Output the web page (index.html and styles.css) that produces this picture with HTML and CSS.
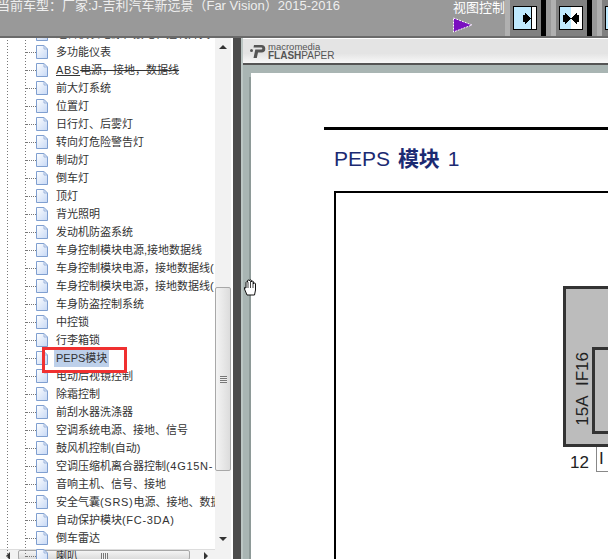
FILE: index.html
```html
<!DOCTYPE html>
<html lang="zh">
<head>
<meta charset="utf-8">
<title>PEPS模块</title>
<link rel="stylesheet" href="styles.css">
</head>
<body>
<div class="app">
  <header class="top">
    <div class="model">当前车型：厂家:J-吉利汽车新远景（Far Vision）2015-2016</div>
    <div class="view">
      <div class="view-label">视图控制</div>
      <svg class="view-arrow" width="20" height="16" viewBox="0 0 20 16"><path d="M0.5 1 L19 8 L0.5 15 Z" fill="#7a0fc0" stroke="#fff" stroke-width="1" stroke-dasharray="2 1"/></svg>
    </div>
    <div class="btn">
      <div class="btn-face">
        <div class="screen">
          <div class="pane blue grow right"><svg width="8" height="11" viewBox="0 0 8 11"><path d="M0 2H2V0H3V1H4V2H5V3H6V4H7V5H8V6H7V7H6V8H5V9H4V10H3V11H2V9H0Z"/></svg></div>
          <div class="pane white narrow"></div>
        </div>
      </div>
    </div>
    <div class="btn">
      <div class="btn-face">
        <div class="screen">
          <div class="pane blue grow right"><svg width="8" height="11" viewBox="0 0 8 11"><path d="M0 2H2V0H3V1H4V2H5V3H6V4H7V5H8V6H7V7H6V8H5V9H4V10H3V11H2V9H0Z"/></svg></div>
          <div class="pane white grow left"><svg width="8" height="11" viewBox="0 0 8 11"><path d="M8 2H6V0H5V1H4V2H3V3H2V4H1V5H0V6H1V7H2V8H3V9H4V10H5V11H6V9H8Z"/></svg></div>
        </div>
      </div>
    </div>
    <div class="btn">
      <div class="btn-face">
        <div class="screen">
          <div class="pane blue narrow"></div>
          <div class="pane white grow left"><svg width="8" height="11" viewBox="0 0 8 11"><path d="M8 2H6V0H5V1H4V2H3V3H2V4H1V5H0V6H1V7H2V8H3V9H4V10H5V11H6V9H8Z"/></svg></div>
        </div>
      </div>
    </div>
  </header>
  <main class="main">
    <nav class="tree">
      <ul class="list">
        <li class="row"><i class="dash"></i><svg class="doc" viewBox="0 0 12 14"><use href="#doc"/></svg><span class="label">组合仪表电源、接地、控制开关</span></li>
        <li class="row"><i class="dash"></i><svg class="doc" viewBox="0 0 12 14"><use href="#doc"/></svg><span class="label">多功能仪表</span></li>
        <li class="row"><i class="dash"></i><svg class="doc" viewBox="0 0 12 14"><use href="#doc"/></svg><span class="label"><u class="lat">ABS</u><s>电源，接地，数据线</s></span></li>
        <li class="row"><i class="dash"></i><svg class="doc" viewBox="0 0 12 14"><use href="#doc"/></svg><span class="label">前大灯系统</span></li>
        <li class="row"><i class="dash"></i><svg class="doc" viewBox="0 0 12 14"><use href="#doc"/></svg><span class="label">位置灯</span></li>
        <li class="row"><i class="dash"></i><svg class="doc" viewBox="0 0 12 14"><use href="#doc"/></svg><span class="label">日行灯、后雾灯</span></li>
        <li class="row"><i class="dash"></i><svg class="doc" viewBox="0 0 12 14"><use href="#doc"/></svg><span class="label">转向灯危险警告灯</span></li>
        <li class="row"><i class="dash"></i><svg class="doc" viewBox="0 0 12 14"><use href="#doc"/></svg><span class="label">制动灯</span></li>
        <li class="row"><i class="dash"></i><svg class="doc" viewBox="0 0 12 14"><use href="#doc"/></svg><span class="label">倒车灯</span></li>
        <li class="row"><i class="dash"></i><svg class="doc" viewBox="0 0 12 14"><use href="#doc"/></svg><span class="label">顶灯</span></li>
        <li class="row"><i class="dash"></i><svg class="doc" viewBox="0 0 12 14"><use href="#doc"/></svg><span class="label">背光照明</span></li>
        <li class="row"><i class="dash"></i><svg class="doc" viewBox="0 0 12 14"><use href="#doc"/></svg><span class="label">发动机防盗系统</span></li>
        <li class="row"><i class="dash"></i><svg class="doc" viewBox="0 0 12 14"><use href="#doc"/></svg><span class="label">车身控制模块电源,接地数据线</span></li>
        <li class="row"><i class="dash"></i><svg class="doc" viewBox="0 0 12 14"><use href="#doc"/></svg><span class="label">车身控制模块电源，接地数据线(</span></li>
        <li class="row"><i class="dash"></i><svg class="doc" viewBox="0 0 12 14"><use href="#doc"/></svg><span class="label">车身控制模块电源，接地数据线(</span></li>
        <li class="row"><i class="dash"></i><svg class="doc" viewBox="0 0 12 14"><use href="#doc"/></svg><span class="label">车身防盗控制系统</span></li>
        <li class="row"><i class="dash"></i><svg class="doc" viewBox="0 0 12 14"><use href="#doc"/></svg><span class="label">中控锁</span></li>
        <li class="row"><i class="dash"></i><svg class="doc" viewBox="0 0 12 14"><use href="#doc"/></svg><span class="label">行李箱锁</span></li>
        <li class="row"><i class="dash"></i><svg class="doc" viewBox="0 0 12 14"><use href="#doc"/></svg><span class="label current">PEPS模块</span></li>
        <li class="row"><i class="dash"></i><svg class="doc" viewBox="0 0 12 14"><use href="#doc"/></svg><span class="label">电动后视镜控制</span></li>
        <li class="row"><i class="dash"></i><svg class="doc" viewBox="0 0 12 14"><use href="#doc"/></svg><span class="label">除霜控制</span></li>
        <li class="row"><i class="dash"></i><svg class="doc" viewBox="0 0 12 14"><use href="#doc"/></svg><span class="label">前刮水器洗涤器</span></li>
        <li class="row"><i class="dash"></i><svg class="doc" viewBox="0 0 12 14"><use href="#doc"/></svg><span class="label">空调系统电源、接地、信号</span></li>
        <li class="row"><i class="dash"></i><svg class="doc" viewBox="0 0 12 14"><use href="#doc"/></svg><span class="label">鼓风机控制(自动)</span></li>
        <li class="row"><i class="dash"></i><svg class="doc" viewBox="0 0 12 14"><use href="#doc"/></svg><span class="label">空调压缩机离合器控制<span class="lat">(4G15N-</span></span></li>
        <li class="row"><i class="dash"></i><svg class="doc" viewBox="0 0 12 14"><use href="#doc"/></svg><span class="label">音响主机、信号、接地</span></li>
        <li class="row"><i class="dash"></i><svg class="doc" viewBox="0 0 12 14"><use href="#doc"/></svg><span class="label">安全气囊<span class="lat">(SRS)</span>电源、接地、数据</span></li>
        <li class="row"><i class="dash"></i><svg class="doc" viewBox="0 0 12 14"><use href="#doc"/></svg><span class="label">自动保护模块<span class="lat">(FC-3DA)</span></span></li>
        <li class="row"><i class="dash"></i><svg class="doc" viewBox="0 0 12 14"><use href="#doc"/></svg><span class="label">倒车雷达</span></li>
        <li class="row"><i class="dash"></i><svg class="doc" viewBox="0 0 12 14"><use href="#doc"/></svg><span class="label">喇叭</span></li>
      </ul>
      <div class="vscroll">
        <span class="arrow-up"></span>
        <div class="vthumb"><span class="grip-v"></span></div>
        <span class="arrow-down"></span>
      </div>
      <div class="hscroll">
        <span class="arrow-left"></span>
        <div class="hthumb"><span class="grip-h"></span></div>
        <span class="arrow-right"></span>
      </div>
      <div class="callout"></div>
    </nav>
    <div class="divider"></div>
    <section class="viewer">
      <div class="fp-bar">
        <svg class="fp-mark" width="16" height="15" viewBox="0 0 16 15"><circle cx="1.500" cy="6.500" r="1.500" fill="#555"/><path d="M4 1h7.500a3.800 3.800 0 0 1 0 7.600H8L6.800 14H3.500l1.800-8.500h6a1 1 0 0 0 0-2H3.500z" fill="#555"/></svg>
        <div class="fp-text">
          <div class="fp-small">macromedia</div>
          <div class="fp-big"><b>FLASH</b>PAPER</div>
        </div>
      </div>
      <div class="stage">
        <article class="page">
          <div class="rule"></div>
          <h1 class="title">PEPS <b>模块</b> 1</h1>
          <div class="diagram">
            <div class="fuse-block">
              <div class="fuse-label">15A&nbsp;&nbsp;IF16</div>
              <div class="fuse-inner"></div>
            </div>
            <div class="pin-row">
              <span class="pin-num">12</span>
              <span class="pin-box">I</span>
            </div>
          </div>
        </article>
        <svg class="hand" width="14" height="18" viewBox="0 0 14 18"><path d="M4 16 1.500 10V8.500l1.500.5V3.500a1 1 0 0 1 1.500-.500V2a1 1 0 0 1 2 0V1.800a1 1 0 0 1 2 .2V3a1 1 0 0 1 2 .3V5a1 1 0 0 1 2 0V11l-1 5Z" fill="#fff" stroke="#111" stroke-width="1"/><path d="M5 3v6M7.500 2v7M10 3v6" stroke="#111" stroke-width=".8"/></svg>
      </div>
    </section>
  </main>
</div>
<svg class="defs" width="0" height="0">
  <defs>
    <linearGradient id="docfill" x1="0" y1="0" x2="1" y2="1"><stop offset="0" stop-color="#fff"/><stop offset="1" stop-color="#c6d8f5"/></linearGradient>
    <symbol id="doc" viewBox="0 0 12 14">
      <path d="M.5.500H8L11.500 4V13.500H.5Z" fill="url(#docfill)" stroke="#7f9fd0" stroke-width="1"/>
      <path d="M8 .5V4H11.500" fill="none" stroke="#9db5dc" stroke-width="1"/>
    </symbol>
  </defs>
</svg>
</body>
</html>
```
FILE: styles.css
```css
* { box-sizing: border-box; }
html, body { margin: 0; padding: 0; background: #fff; }
body { font-family: "Liberation Sans", "Noto Sans CJK SC", sans-serif; overflow: hidden; }
.app { width: 608px; height: 559px; display: flex; flex-direction: column; overflow: hidden; }
.defs { position: absolute; }

.top { height: 38px; flex: none; display: flex; background: #999; border-bottom: 2px solid #6a6a6a; overflow: hidden; }
.model { width: 453px; flex: none; margin-left: -3px; margin-top: -3px; color: #eee; font-size: 13px; line-height: 18px; white-space: nowrap; }
.view { width: 52px; flex: none; margin-left: 3px; display: flex; flex-direction: column; }
.view-label { color: #fff; font-size: 13px; line-height: 17px; white-space: nowrap; margin-top: -1px; }
.view-arrow { display: block; margin-top: 1px; }
.btn { width: 46px; flex: none; height: 36px; padding-left: 5px; background: #b0b0b0; border-right: 5px solid #999; }
.btn-face { height: 36px; padding: 6px 4px 6px 3px; background: #808080; border-right: 5px solid #000; }
.screen { height: 24px; display: flex; border: 1px solid #000; background: #fff; width: 24px; }
.pane { display: flex; align-items: center; justify-content: center; }
.pane.blue { background: #bfeaff; }
.pane.white { background: #fff; }
.pane.grow { flex: 1; }
.pane.narrow { width: 5px; border-left: 1px solid #000; }
.pane.blue.narrow { border-left: 0; border-right: 1px solid #000; }
.pane.right { justify-content: flex-end; }
.pane.left { justify-content: flex-start; }
.pane svg { display: block; fill: #000; }

.main { flex: 1; display: flex; min-height: 0; }
.tree { width: 233px; flex: none; position: relative; background: #fff; overflow: hidden; }
.list {
  list-style: none; margin: -13px 0 0; padding: 0; width: 215px; position: relative; z-index: 2;
  background-image: repeating-linear-gradient(to bottom, #777 0 1px, transparent 1px 3px), repeating-linear-gradient(to bottom, #777 0 1px, transparent 1px 3px);
  background-size: 1px 100%, 1px 100%;
  background-position: 7px 0, 25px 0;
  background-repeat: no-repeat;
}
.row { height: 18px; display: flex; align-items: center; white-space: nowrap; overflow: hidden; }
.dash { width: 10px; margin-left: 26px; flex: none; height: 0; border-top: 1px dotted #777; }
.doc { width: 12px; height: 14px; flex: none; display: block; }
.label { margin-left: 6px; padding: 0 2px; font-size: 11px; line-height: 17px; color: #333; }
.label u { text-decoration: underline; }
.label s { text-decoration: line-through; }
.label .lat { letter-spacing: 0.700px; }
.label.current { background: #bdd0ea; }

.vscroll { position: absolute; left: 215px; top: 0; bottom: 0; width: 16px; background: #f2f2f2; z-index: 1; }
.arrow-up { position: absolute; left: 4px; top: 7px; border: 4px solid transparent; border-top: 0; border-bottom: 4px solid #333; }
.arrow-down { position: absolute; left: 4px; top: 499px; border: 4px solid transparent; border-bottom: 0; border-top: 4px solid #333; }
.vthumb { position: absolute; left: 0; top: 249px; width: 16px; height: 184px; background: linear-gradient(to right, #f4f4f4, #dcdcdc); border: 1px solid #a8a8a8; border-radius: 2px; display: flex; align-items: center; justify-content: center; }
.grip-v { width: 7px; height: 7px; background: repeating-linear-gradient(to bottom, #777 0 1px, #eee 1px 2px); }

.hscroll { position: absolute; left: 0; bottom: 0; width: 215px; height: 10px; background: #f2f2f2; border-top: 1px solid #ddd; z-index: 1; }
.arrow-left { position: absolute; left: 6px; top: 2px; border: 4px solid transparent; border-left: 0; border-right: 4px solid #333; }
.arrow-right { position: absolute; left: 204px; top: 2px; border: 4px solid transparent; border-right: 0; border-left: 4px solid #333; }
.hthumb { position: absolute; left: 18px; top: 0; width: 172px; height: 10px; background: linear-gradient(to bottom, #f4f4f4, #dcdcdc); border: 1px solid #a8a8a8; border-radius: 2px; display: flex; justify-content: center; padding-top: 2px; }
.grip-h { width: 7px; height: 6px; background: repeating-linear-gradient(to right, #777 0 1px, #eee 1px 2px); }

.callout { position: absolute; left: 42px; top: 309px; width: 85px; height: 26px; border: 3px solid #f03030; z-index: 3; }

.divider { width: 8px; flex: none; background: #4d4d4d; }
.viewer { flex: 1; min-width: 0; display: flex; flex-direction: column; background: #a9b5b3; border-left: 2px solid #bcc6c4; }
.fp-bar { height: 27px; flex: none; display: flex; align-items: center; padding-left: 7px; gap: 2px; background: linear-gradient(to bottom, #e4e4e4 60%, #f8f8f8); border-top: 1px solid #fff; border-bottom: 2px solid #555; }
.fp-mark { display: block; }
.fp-text { color: #555; line-height: 9px; }
.fp-small { font-size: 9.500px; }
.fp-big { font-size: 10px; }
.fp-big b { color: #555; }

.stage { flex: 1; min-height: 0; position: relative; padding: 8px 0 0 8px; }
.page { height: 100%; background: #fff; padding: 54px 0 0 73px; overflow: hidden; box-shadow: -2px 4px 0 #8e9a98; }
.rule { height: 3px; background: #000; margin-bottom: 15px; }
.title { margin: 0 0 19px 10px; font-size: 21px; line-height: 27px; font-weight: 400; color: #1b2a72; white-space: nowrap; word-spacing: 2px; }
.title b { font-weight: 700; }
.diagram { margin-left: 10px; height: 400px; width: 400px; border: 2px solid #000; padding: 93px 0 0 227px; }
.fuse-block { height: 161px; width: 120px; background: #bcbcbc; border: 3px solid #333; display: flex; align-items: flex-end; padding: 0 0 10px 7px; }
.fuse-label { writing-mode: vertical-rl; transform: rotate(180deg); font-size: 17px; line-height: 19px; color: #222; white-space: nowrap; margin-bottom: 8px; width: 19px; }
.fuse-inner { width: 60px; height: 87px; border: 3px solid #333; margin-left: 0; }
.pin-row { display: flex; align-items: flex-start; color: #222; }
.pin-num { font-size: 17px; line-height: 24px; margin: 4px 0 0 7px; }
.pin-box { width: 40px; height: 25px; border: 1px solid #888; border-top: 0; margin-left: 7px; padding-left: 2px; font-size: 17px; line-height: 24px; }

.hand { position: absolute; left: 0; top: 214px; z-index: 4; }
```
